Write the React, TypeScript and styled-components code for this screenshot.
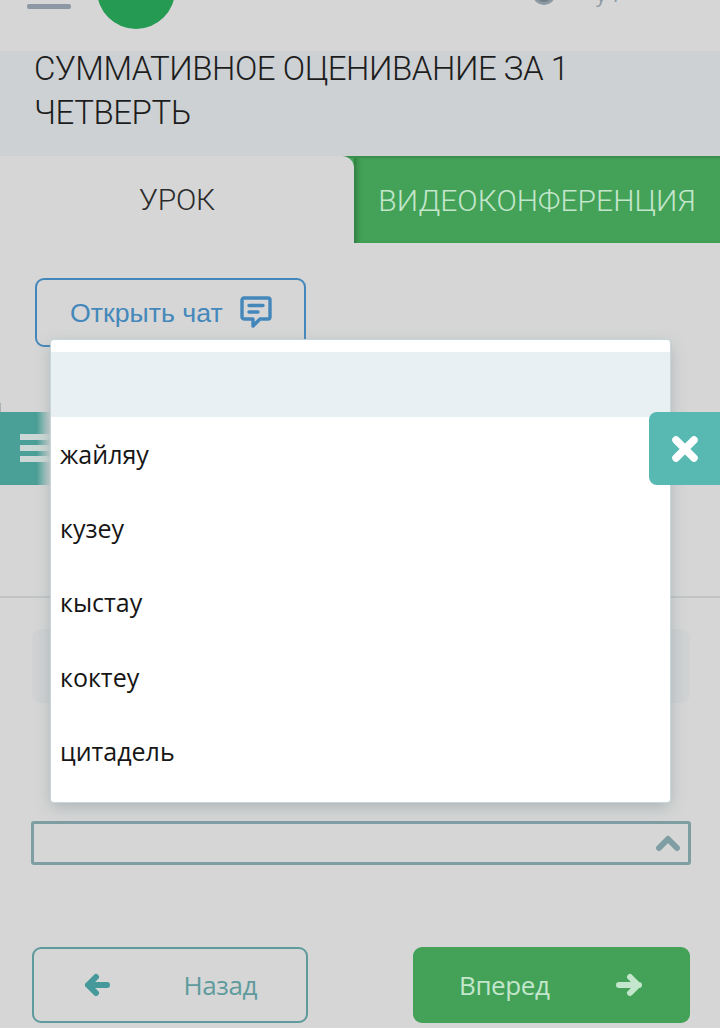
import React from "react";
import styled, { createGlobalStyle } from "styled-components";

const Global = createGlobalStyle`
  html, body { margin: 0; padding: 0; background: #d6d6d6; }
  * { box-sizing: border-box; }
`;

const Page = styled.div`
  position: relative;
  width: 720px;
  height: 1028px;
  overflow: hidden;
  background: #d6d6d6;
  font-family: "Open Sans", "Noto Sans", sans-serif;
`;

const Header = styled.header`
  height: 51px;
  display: flex;
  align-items: flex-start;
  padding-left: 27px;
  overflow: hidden;
`;

const Burger = styled.div`
  width: 44px;
  height: 5px;
  margin-top: 4px;
  border-radius: 2px;
  background: #8c98a3;
`;

const MenuBadge = styled.div`
  width: 78px;
  height: 78px;
  margin: -49px 0 0 26px;
  border-radius: 50%;
  background: #249a52;
  color: #bfe3ca;
  font: 20px/1 "Liberation Sans", sans-serif;
  display: flex;
  justify-content: center;
  align-items: flex-end;
  padding-bottom: 27px;
`;

const UserArea = styled.div`
  margin-left: 358px;
  margin-top: -15px;
  display: flex;
  align-items: center;
  gap: 41px;
  color: #8c98a3;
`;

const Globe = styled.div`
  width: 22px;
  height: 20px;
  border-radius: 50%;
  border: 3px solid #8c98a3;
  background: #70808c;
`;

const UserText = styled.span`
  font: 20px/1 "Open Sans", sans-serif;
`;

const TitleBand = styled.div`
  display: flow-root;
  height: 105px;
  padding: 0 35px;
  background: #cdd1d3;
`;

const Title = styled.h1`
  margin: -4px 0 0 -1px;
  width: 570px;
  color: #1d1d1d;
  font: 300 33px/44px "Roboto", "Liberation Sans", sans-serif;
  letter-spacing: -0.44px;
`;

const Tabs = styled.div`
  display: flex;
  height: 87px;
  background: #43a257;
  border-top: 2px solid #3a8f4d;
`;

const ActiveTab = styled.div`
  width: 354px;
  margin-top: -2px;
  display: flex;
  align-items: center;
  justify-content: center;
  background: #d6d6d6;
  border-top-right-radius: 12px;
  color: #2b2b2b;
  font: 300 30px/1 "Roboto", "Liberation Sans", sans-serif;
  letter-spacing: -0.2px;
`;

const GreenTab = styled.div`
  flex: 1;
  display: flex;
  align-items: center;
  justify-content: center;
  box-shadow: inset 7px 0 6px -5px rgba(20, 70, 35, 0.5);
  color: #c3e6cc;
  font: 300 30px/1 "Roboto", "Liberation Sans", sans-serif;
  letter-spacing: 0.05px;
`;

const ChatButton = styled.button`
  width: 271px;
  height: 69px;
  margin: 35px 0 0 35px;
  display: flex;
  align-items: flex-start;
  gap: 16px;
  padding: 18px 0 0 33px;
  background: transparent;
  border: 2px solid #4488bb;
  border-radius: 9px;
  color: #4488bb;
  font: 26.7px/30px "Liberation Sans", sans-serif;
`;

const ChatGlyph = styled.svg`
  flex: none;
  margin-top: -3px;
`;

const Divider = styled.hr`
  margin: 249px 0 0;
  border: 0;
  height: 2px;
  background: #c3c5c5;
`;

const GreyBlock = styled.div`
  height: 74px;
  margin: 31px 30px 0 32px;
  border-radius: 9px;
  background: #d0d2d3;
`;

const SelectBox = styled.div`
  height: 44px;
  margin: 118px 29px 0 31px;
  padding-right: 7px;
  display: flex;
  align-items: center;
  justify-content: flex-end;
  border: 3px solid #7f9ea4;
  border-radius: 3px;
`;

const NavRow = styled.nav`
  display: flex;
  justify-content: space-between;
  margin: 82px 30px 0 32px;
`;

const BackButton = styled.button`
  width: 276px;
  height: 76px;
  display: flex;
  align-items: center;
  padding: 0 49px 0 50px;
  justify-content: space-between;
  background: transparent;
  border: 2px solid #5f9a9c;
  border-radius: 9px;
  color: #5f9b9d;
  font: 26px/1 "Open Sans", sans-serif;
  letter-spacing: -0.4px;
`;

const NextButton = styled.button`
  width: 277px;
  height: 76px;
  display: flex;
  align-items: center;
  padding: 0 48px 0 46px;
  justify-content: space-between;
  background: #43a257;
  border: 0;
  border-radius: 9px;
  color: #c3e6cc;
  font: 26px/1 "Open Sans", sans-serif;
  letter-spacing: -0.4px;
`;

const SideTab = styled.div`
  position: absolute;
  left: 0;
  top: 412px;
  width: 51px;
  height: 73px;
  padding: 22px 0 0 20px;
  display: flex;
  flex-direction: column;
  gap: 5px;
  background: linear-gradient(90deg, #4a9f97 0, #4a9f97 72%, #d6d6d6 100%);
  &::before {
    content: "";
    position: absolute;
    left: 0;
    top: -9px;
    width: 1px;
    height: 9px;
    background: #a9b3b1;
  }
`;

const SideBar = styled.span`
  display: block;
  height: 6px;
  background: #ccd8d5;
`;

const Dropdown = styled.ul`
  position: absolute;
  left: 51px;
  top: 340px;
  width: 619px;
  height: 462px;
  margin: 0;
  padding: 12px 0 0;
  list-style: none;
  background: #fff;
  border-radius: 3px;
  box-shadow: 0 0 0 1px #c6d6da, 0 5px 16px rgba(120, 140, 145, 0.45);
`;

const Option = styled.li<{ $blank?: boolean }>`
  height: ${(p) => (p.$blank ? "65px" : "74.3px")};
  padding-left: 9px;
  display: flex;
  align-items: center;
  background: ${(p) => (p.$blank ? "#e9f0f3" : "transparent")};
  color: #161616;
  font: 25px/1 "Open Sans", sans-serif;
`;

const CloseButton = styled.button`
  position: absolute;
  right: 0;
  top: 412px;
  width: 71px;
  height: 73px;
  display: flex;
  align-items: center;
  justify-content: center;
  background: #58b9b3;
  border: 0;
  border-radius: 8px 0 0 8px;
`;

const ChatIcon = () => (
  <ChatGlyph width="34" height="34" viewBox="0 0 34 34" fill="none" stroke="#4488bb" strokeWidth="3.4" strokeLinejoin="round" strokeLinecap="round">
    <path d="M5 3h24a2 2 0 0 1 2 2v17a2 2 0 0 1-2 2H21l-7 7v-7H5a2 2 0 0 1-2-2V5a2 2 0 0 1 2-2z" />
    <path d="M10 10.5h14M10 17h9" />
  </ChatGlyph>
);

const Arrow = ({ color, flip }: { color: string; flip?: boolean }) => (
  <svg width="26" height="24" viewBox="0 0 26 24" fill="none" stroke={color} strokeWidth="6" strokeLinecap="round" strokeLinejoin="round">
    <path d={flip ? "M3 12h20M14 4l8 8-8 8" : "M23 12H4M12 4l-8 8 8 8"} />
  </svg>
);

const ChevronUp = () => (
  <svg width="26" height="18" viewBox="0 0 26 18" fill="none" stroke="#7f9ea4" strokeWidth="6" strokeLinecap="round" strokeLinejoin="round">
    <path d="M4 14l9-9 9 9" />
  </svg>
);

const CloseIcon = () => (
  <svg width="28" height="28" viewBox="0 0 28 28" fill="none" stroke="#fff" strokeWidth="7.5" strokeLinecap="round">
    <path d="M5 5l18 18M23 5L5 23" />
  </svg>
);

const options = ["жайляу", "кузеу", "кыстау", "коктеу", "цитадель"];

export default function App() {
  return (
    <Page>
      <Global />
      <Header>
        <Burger />
        <MenuBadge>МЕНЮ</MenuBadge>
        <UserArea>
          <Globe />
          <UserText>уч</UserText>
        </UserArea>
      </Header>
      <TitleBand>
        <Title>СУММАТИВНОЕ ОЦЕНИВАНИЕ ЗА 1 ЧЕТВЕРТЬ</Title>
      </TitleBand>
      <Tabs>
        <ActiveTab>УРОК</ActiveTab>
        <GreenTab>ВИДЕОКОНФЕРЕНЦИЯ</GreenTab>
      </Tabs>
      <ChatButton>
        Открыть чат
        <ChatIcon />
      </ChatButton>
      <Divider />
      <GreyBlock />
      <SelectBox>
        <ChevronUp />
      </SelectBox>
      <NavRow>
        <BackButton>
          <Arrow color="#45999a" />
          Назад
        </BackButton>
        <NextButton>
          Вперед
          <Arrow color="#c3e6cc" flip />
        </NextButton>
      </NavRow>
      <SideTab>
        <SideBar />
        <SideBar />
        <SideBar />
      </SideTab>
      <Dropdown>
        <Option $blank />
        {options.map((o) => (
          <Option key={o}>{o}</Option>
        ))}
      </Dropdown>
      <CloseButton>
        <CloseIcon />
      </CloseButton>
    </Page>
  );
}
